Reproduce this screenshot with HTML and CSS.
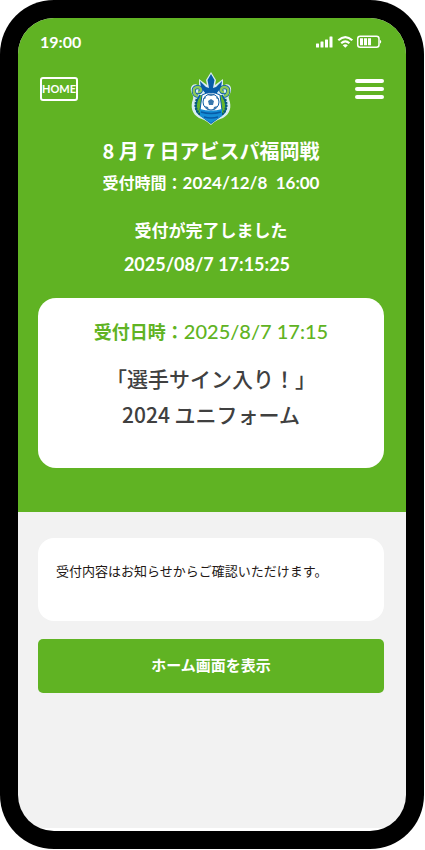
FILE: index.html
```html
<!DOCTYPE html>
<html lang="ja">
<head>
  <meta charset="UTF-8" />
  <meta name="viewport" content="width=device-width, initial-scale=1" />
  <title>受付完了</title>
  <link rel="stylesheet" href="styles.css">
</head>
<body>

<div class="phone">
  <main class="screen">
    <section class="hero">
      <div class="status-bar">
        <span class="clock">19:00</span>
        <svg class="status-icons" width="66" height="14" viewBox="0 0 66 14" fill="#fff" aria-hidden="true">
          <rect x="0" y="8.500" width="3" height="4" rx="0.500"/>
          <rect x="4.500" y="6.500" width="3" height="6" rx="0.500"/>
          <rect x="9" y="4.500" width="3" height="8" rx="0.500"/>
          <rect x="13.500" y="1.500" width="3" height="11" rx="0.500"/>
          <path d="M22.300 5.300Q29.300-1.200 36.300 5.300M25.200 8.200Q29.300 4.500 33.400 8.200" fill="none" stroke="#fff" stroke-width="2.200"/>
          <path d="M26.700 10.200Q29.300 8.500 31.900 10.200L29.300 12.800z"/>
          <rect x="41.700" y="1.300" width="21.300" height="11" rx="2.500" fill="none" stroke="#fff" stroke-width="1.500"/>
          <path d="M44 3.300h3v7h-3zM48 3.300h3v7h-3zM52 3.300h3v7h-3zM64 4.800q2.500 2 0 4z"/>
        </svg>
      </div>

      <header class="top-nav">
        <a class="home-link" href="#">HOME</a>
        <svg class="emblem" width="42" height="54" viewBox="0 0 42 54" role="img" aria-label="クラブエンブレム">
          <path d="M21 0l5 8-1 5 8-6v7c5-4 9 0 8 5-1 4-3 4-2 8 3 8 1 15-6 19-6 2-9 4-12 7-3-3-6-5-12-7C2 42 0 35 3 27c1-4-1-4-2-8-1-5 3-9 8-5V7l8 6-1-5z" fill="#d9edf3"/>
          <path d="M21 2l3.500 6-1.500 8 3-1 6-6-1 7-5 6H16l-5-6-1-7 6 6 3 1-1.500-8z" fill="#075ca8"/>
          <path d="M10 23c-5 7-6 16 0 20l11 8 11-8c6-4 5-13 0-20" fill="#65b52c" stroke="#075ca8" stroke-width="1.500"/>
          <path d="M8 24c-5-1-6-8-1-9 5 0 5 6 1 5M34 24c5-1 6-8 1-9-5 0-5 6-1 5" fill="none" stroke="#075ca8" stroke-width="4"/>
          <path d="M8 24c-5-1-6-8-1-9 5 0 5 6 1 5M34 24c5-1 6-8 1-9-5 0-5 6-1 5" fill="none" stroke="#8cc85a" stroke-width="2.500"/>
          <path d="M7 27q-4 10 4 16M35 27q4 10-4 16" fill="none" stroke="#075c70" stroke-width="2.500" stroke-dasharray="2 1"/>
          <path d="M12 23q9-5 18 0l2 15q-3 7-11 9-8-2-11-9z" fill="#fff" stroke="#075ca8"/>
          <path d="M10 37q11 3 22 0v7l-11 7-11-7z" fill="#168dd5"/>
          <path d="M11 40q10 3 20 0M14 45q7 2 14 0" stroke="#075ca8" stroke-width="1.500" fill="none"/>
          <circle cx="21" cy="30" r="8" fill="#fff" stroke="#075ca8" stroke-width="1"/>
          <path d="M21 27l3 2-1 4h-4l-1-4zM17 23l4 1 4-1-4-1zM13 28l3-2-1-2-2 3zM29 28l-3-2 1-2 2 3zM15 34l3 1 1 3-3-1zM27 34l-3 1-1 3 3-1z" fill="#3a78ad"/>
        </svg>
        <button class="menu-button" type="button" aria-label="メニュー">
          <span></span>
          <span></span>
          <span></span>
        </button>
      </header>

      <h1>8 月 7 日アビスパ福岡戦</h1>
      <p class="reception-time">受付時間：<span class="num">2024/12/8&nbsp; 16:00</span></p>
      <p class="complete">受付が完了しました</p>
      <p class="complete-time num">2025/08/7 17:15:25</p>

      <div class="card">
        <h2>受付日時：<span class="num">2025/8/7 17:15</span></h2>
        <p class="item">「選手サイン入り！」<br>2024 ユニフォーム</p>
      </div>
    </section>

    <section class="details">
      <p class="notice">受付内容はお知らせからご確認いただけます。</p>
      <button class="home-button" type="button">ホーム画面を表示</button>
    </section>
  </main>
</div>

</body>
</html>
```

FILE: styles.css
```css
* {
  box-sizing: border-box;
}
body {
  margin: 0;
  background: white;
  color: #231815;
  font-family: "Noto Sans CJK JP", sans-serif;
}
h1, h2, p {
  margin: 0;
}
.phone {
  display: flex;
  min-height: calc(100vh - 1px);
  margin-right: 1px;
  padding: 18px;
  border-radius: 54px;
  background: black;
}
.screen {
  flex: 1;
  overflow: hidden;
  border-radius: 36px;
  background: linear-gradient(to top, white 3px, #f2f2f2 3px);
}
.hero {
  padding: 14px 22px 44px 20px;
  background: #60b323;
  color: white;
  text-align: center;
}
.num {
  font-family: Lato, sans-serif;
}
.status-bar {
  display: flex;
  justify-content: space-between;
  align-items: center;
  height: 20px;
  padding: 0 2px;
}
.clock {
  font: 700 16px/20px Lato, sans-serif;
}
.top-nav {
  display: grid;
  grid-template-columns: 1fr auto 1fr;
  align-items: center;
  height: 54px;
  margin: 20px 0 12px;
}
.home-link {
  justify-self: start;
  margin: 0 2px 20px;
  border: 2px solid white;
  border-radius: 3px;
  color: white;
  font: 700 11px/20px Lato, sans-serif;
  text-decoration: none;
}
.menu-button {
  display: flex;
  flex-direction: column;
  justify-self: end;
  gap: 4px;
  width: 29px;
  margin-bottom: 20px;
  padding: 0;
  border: none;
  background: none;
  cursor: pointer;
}
.menu-button span {
  height: 4px;
  border-radius: 2px;
  background: white;
}
h1 {
  font-size: 20px;
  line-height: 26px;
  font-weight: 700;
}
.reception-time {
  margin-top: 6px;
  font-size: 16px;
  line-height: 24px;
  font-weight: 700;
}
.reception-time .num {
  font-size: 17px;
}
.complete {
  margin-top: 22px;
  font-size: 17px;
  line-height: 26px;
  font-weight: 700;
}
.complete-time {
  margin-top: 8px;
  padding-right: 8px;
  font-size: 18px;
  line-height: 26px;
  font-weight: 700;
}
.card {
  min-height: 170px;
  margin-top: 21px;
  padding: 20px;
  border-radius: 18px;
  background: white;
  color: #404040;
}
h2 {
  color: #60b323;
  font-size: 18px;
  line-height: 26px;
  font-weight: 700;
}
h2 .num {
  font-size: 20px;
  font-weight: 500;
}
.item {
  margin-top: 16px;
  font-size: 21px;
  line-height: 36px;
  font-weight: 500;
}
.details {
  padding: 26px 22px 26px 20px;
}
.notice {
  min-height: 83px;
  padding: 21px 18px;
  border-radius: 16px;
  background: white;
  font-size: 13px;
  line-height: 24px;
}
.home-button {
  width: 100%;
  height: 54px;
  margin-top: 18px;
  padding: 0 0 4px;
  border: none;
  border-radius: 5px;
  background: #60b323;
  color: white;
  font: 700 15px "Noto Sans CJK JP", sans-serif;
  cursor: pointer;
}
```
